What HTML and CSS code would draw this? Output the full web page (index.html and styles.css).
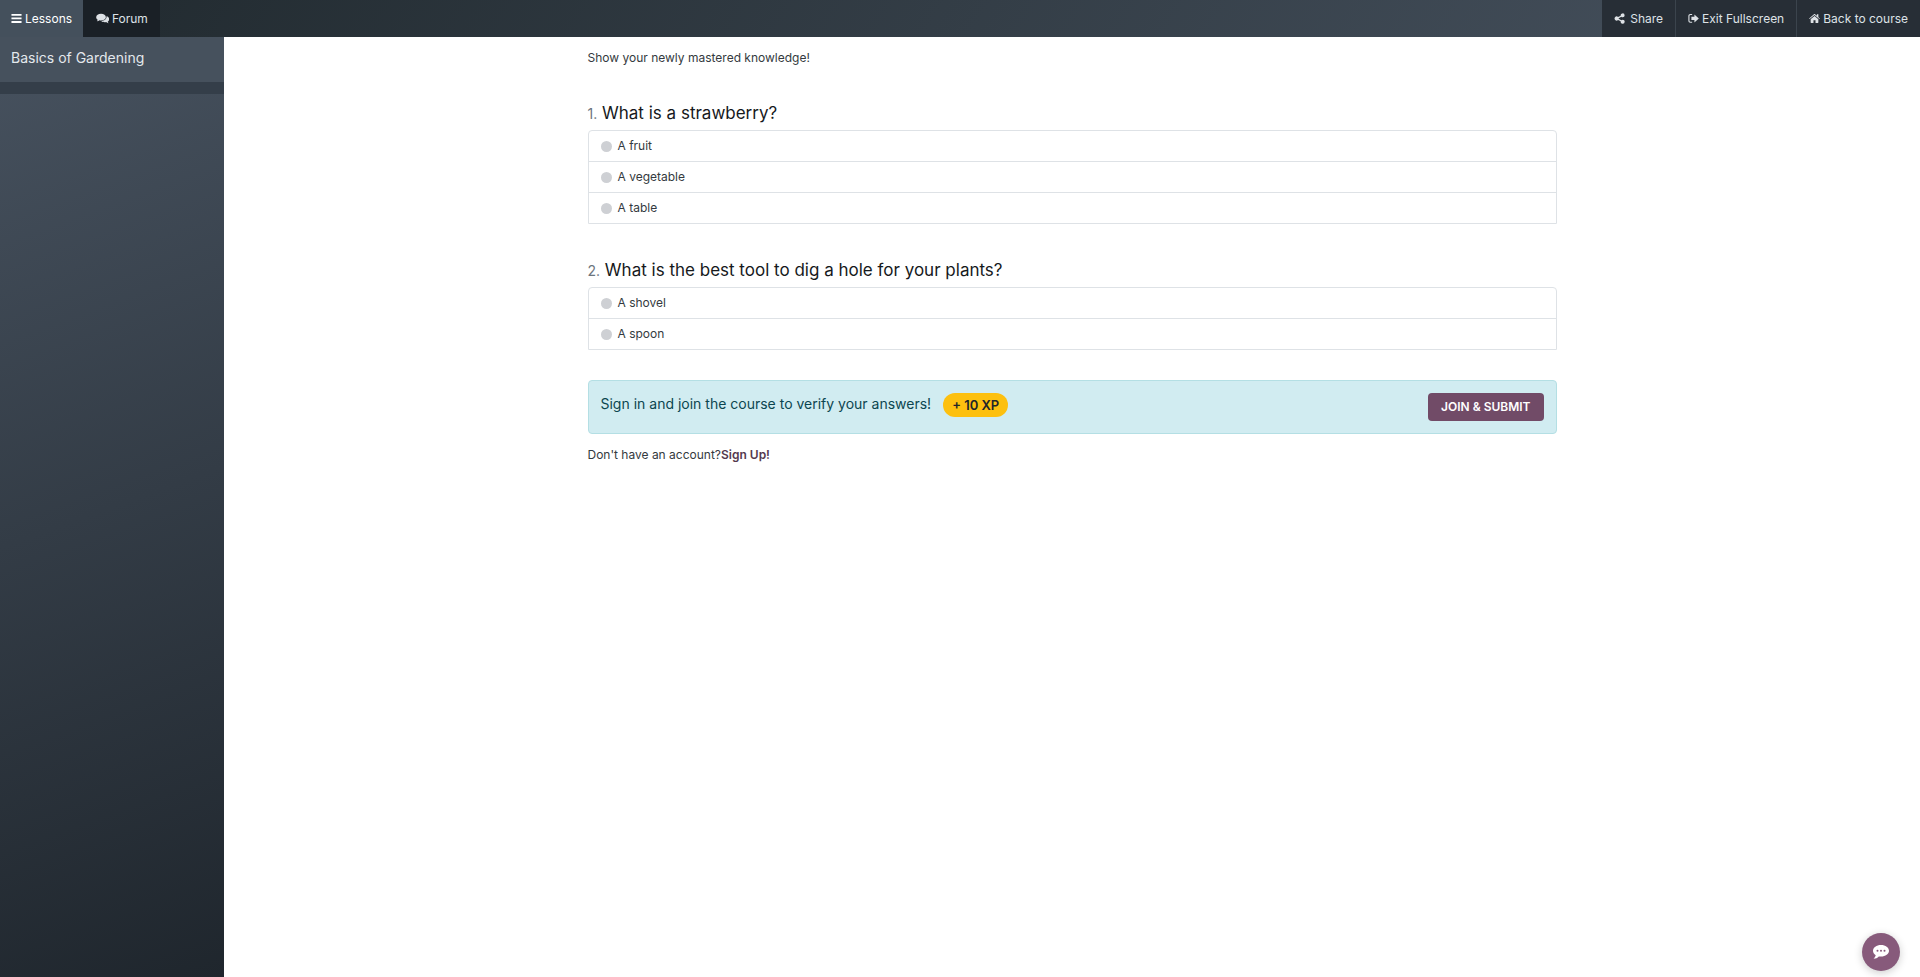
FILE: index.html
```
<!DOCTYPE html>
<html lang="en">
<head>
    <meta charset="UTF-8">
    <meta name="viewport" content="width=device-width, initial-scale=1.0">
    <title>Basics of Gardening</title>
    <link rel="stylesheet" href="styles.css">
</head>
<body>
    <header class="topbar">
        <nav class="nav-left">
            <a href="#" class="nav-link active">
                <svg class="icon" viewBox="0 0 12 12"><path d="M.5 1h11v2H.5zM.5 4.9h11v2H.5zM.5 8.8h11v2H.5z"/></svg>
                Lessons
            </a>
            <a href="#" class="nav-link forum">
                <svg class="icon" viewBox="0 0 14 12"><path d="M5.5.8C2.5.8.2 2.4.2 4.5c0 1.200.7 2.200 1.800 2.900C1.800 8 1.400 8.500.9 9c1.100-.1 2.200-.5 3-1.100.5.1 1 .2 1.600.2 3 0 5.300-1.600 5.300-3.600S8.500.8 5.500.8z"/><path d="M11.600 3.300c.2 3.200-2.600 5.400-6 5.500 1 .9 2.400 1.300 4 1.300.5 0 1-.1 1.400-.2.800.7 1.700 1.100 2.800 1.200-.5-.5-.8-1-1-1.600 1-.6 1.600-1.500 1.600-2.600 0-1.500-1.100-2.900-2.800-3.600z"/></svg>
                Forum
            </a>
        </nav>
        <nav class="nav-right">
            <a href="#" class="nav-link share">
                <svg class="icon" viewBox="0 0 12 12"><path d="M9.500 7.300c-.6 0-1.100.2-1.500.6L5.100 6.400v-.8L8 4.100c.4.400.9.600 1.500.6a2.150 2.150 0 1 0-2.200-1.800L4.400 4.400a2.200 2.200 0 1 0 0 3.200l2.900 1.500a2.200 2.200 0 1 0 2.200-1.800z"/></svg>
                Share
            </a>
            <a href="#" class="nav-link">
                <svg class="icon" viewBox="0 0 12 12"><path d="M4.500 1.200H2.600C1.300 1.200.4 2.100.4 3.400v5c0 1.300.9 2.200 2.200 2.200h1.900V9.500H2.700c-.7 0-1.100-.4-1.100-1.100v-5c0-.7.4-1.100 1.100-1.100h1.800z"/><path d="M7 1.500v2.600H3.700v3.600H7v2.600l4.800-4.400z"/></svg>
                Exit Fullscreen
            </a>
            <a href="#" class="nav-link">
                <svg class="icon" viewBox="0 0 12 12"><path d="M6 3.200 1.800 6.700v3.700c0 .3.200.5.500.5h2.600V8h2.200v2.900h2.600c.3 0 .5-.2.500-.5V6.700z"/><path d="M11.900 5.900 10.200 4.500V1.400H8.600v1.700L6.600 1.400c-.4-.3-.8-.3-1.200 0L.1 5.900l.6.700L6 2.200l5.300 4.400z"/></svg>
                Back to course
            </a>
        </nav>
    </header>

    <div class="content">
        <aside class="sidebar">
            <a href="#" class="course-title">Basics of Gardening</a>
            <div class="section"></div>
        </aside>

        <main class="quiz">
            <div class="quiz-inner">
                <p class="intro">Show your newly mastered knowledge!</p>

                <form class="quiz-form">
                    <section class="question">
                        <h2><small>1.</small> What is a strawberry?</h2>
                        <div class="answers">
                            <label class="answer"><input type="radio" name="q1"> A fruit</label>
                            <label class="answer"><input type="radio" name="q1"> A vegetable</label>
                            <label class="answer"><input type="radio" name="q1"> A table</label>
                        </div>
                    </section>

                    <section class="question">
                        <h2><small>2.</small> What is the best tool to dig a hole for your plants?</h2>
                        <div class="answers">
                            <label class="answer"><input type="radio" name="q2"> A shovel</label>
                            <label class="answer"><input type="radio" name="q2"> A spoon</label>
                        </div>
                    </section>

                    <div class="alert">
                        <b class="alert-text">Sign in and join the course to verify your answers!</b>
                        <span class="badge">+ 10 XP</span>
                        <button type="button" class="submit">JOIN &amp; SUBMIT</button>
                    </div>
                </form>

                <p class="signup">Don't have an account?<a href="#">Sign Up!</a></p>
            </div>
        </main>
    </div>

    <button type="button" class="chat" aria-label="Chat">
        <svg viewBox="0 0 18 16"><path class="bubble" d="M9 1C4.500 1 1 3.600 1 6.800c0 1.800 1 3.300 2.700 4.400-.3 1.300-1 2.400-2.200 3.500 2.200-.1 4-.9 5.300-2.300.7.100 1.400.2 2.200.2 4.500 0 8-2.600 8-5.800S13.500 1 9 1z"/><circle cx="5.500" cy="6.800" r="1"/><circle cx="9" cy="6.800" r="1"/><circle cx="12.500" cy="6.800" r="1"/></svg>
    </button>
</body>
</html>
```
FILE: styles.css
```
* {
    box-sizing: border-box;
}

body {
    margin: 0;
    min-height: 100vh;
    display: flex;
    flex-direction: column;
    font-family: Inter, sans-serif;
    font-size: 12px;
    line-height: 20px;
    color: #343a40;
    background-color: #ffffff;
}

a {
    text-decoration: none;
}

.topbar {
    display: flex;
    justify-content: space-between;
    height: 37px;
    background-image: linear-gradient(120deg, #20292e, #47525f);
}

.nav-left,
.nav-right {
    display: flex;
}

.nav-link {
    display: flex;
    align-items: center;
    gap: 3px;
    padding: 0 12px;
    color: #dee2e6;
    background-color: #272e36;
}

.nav-right .nav-link + .nav-link {
    border-left: 1px solid #3b444d;
}

.nav-left .active {
    padding: 0 11px;
    color: #ffffff;
    background-color: #44505c;
}

.nav-left .forum {
    padding-left: 13px;
    background-color: #1a2026;
}

.nav-link.share {
    gap: 5px;
}

.icon {
    height: 11px;
    fill: currentColor;
}

.content {
    flex: 1;
    display: flex;
}

.sidebar {
    width: 224px;
    flex-shrink: 0;
    background-image: linear-gradient(160deg, #47525f, #1f262d);
}

.course-title {
    display: block;
    padding: 11px;
    height: 45px;
    font-size: 14px;
    color: #e3e8ec;
    background-color: #46515d;
}

.section {
    height: 12px;
    background-color: #343e49;
}

.quiz {
    flex: 1;
    padding: 11px 16px;
}

.quiz-inner {
    max-width: 969px;
    margin: 0 auto;
}

.intro {
    margin: 0 0 33px;
}

.question + .question {
    margin-top: 34px;
}

.question h2 {
    margin: 0 0 4px;
    font-size: 17px;
    font-weight: 400;
    line-height: 24px;
    color: #16191c;
}

.question small {
    font-size: 14px;
    color: #6c757d;
}

.answers {
    border: 1px solid #dee2e6;
    border-radius: 4px 4px 0 0;
}

.answer {
    display: flex;
    align-items: center;
    gap: 6px;
    height: 30px;
    padding: 0 12px;
}

.answer + .answer {
    height: 31px;
    border-top: 1px solid #dee2e6;
}

.answer input {
    appearance: none;
    width: 11px;
    height: 11px;
    margin: 0;
    border-radius: 50%;
    background-color: #ced0d4;
}

.answer input:checked {
    background-color: #714b67;
}

.alert {
    display: flex;
    align-items: flex-start;
    margin-top: 30px;
    padding: 12px;
    border: 1px solid #b4dfe4;
    border-radius: 4px;
    color: #0c4650;
    background-color: #d1ecf1;
}

.alert-text {
    font-size: 14px;
    font-weight: 400;
    line-height: 22px;
}

.badge {
    margin-left: 12px;
    padding: 0 9px;
    border-radius: 12px;
    font-size: 13px;
    font-weight: 600;
    line-height: 24px;
    color: #212529;
    background-color: #fdc00f;
}

.submit {
    margin-left: auto;
    padding: 0 13px;
    border: none;
    border-radius: 4px;
    font-family: inherit;
    font-size: 12px;
    font-weight: 600;
    line-height: 28px;
    color: #ffffff;
    background-color: #714b67;
    cursor: pointer;
}

.signup {
    margin: 11px 0 0;
}

.signup a {
    font-weight: 600;
    color: #55394e;
}

.chat {
    position: fixed;
    right: 20px;
    bottom: 6px;
    display: flex;
    align-items: center;
    justify-content: center;
    width: 38px;
    height: 38px;
    padding: 0;
    border: none;
    border-radius: 50%;
    background-color: #875a7b;
    box-shadow: 0 2px 8px rgba(0, 0, 0, 0.2);
    cursor: pointer;
}

.chat svg {
    width: 18px;
    fill: #875a7b;
}

.chat .bubble {
    fill: #ffffff;
}
```
